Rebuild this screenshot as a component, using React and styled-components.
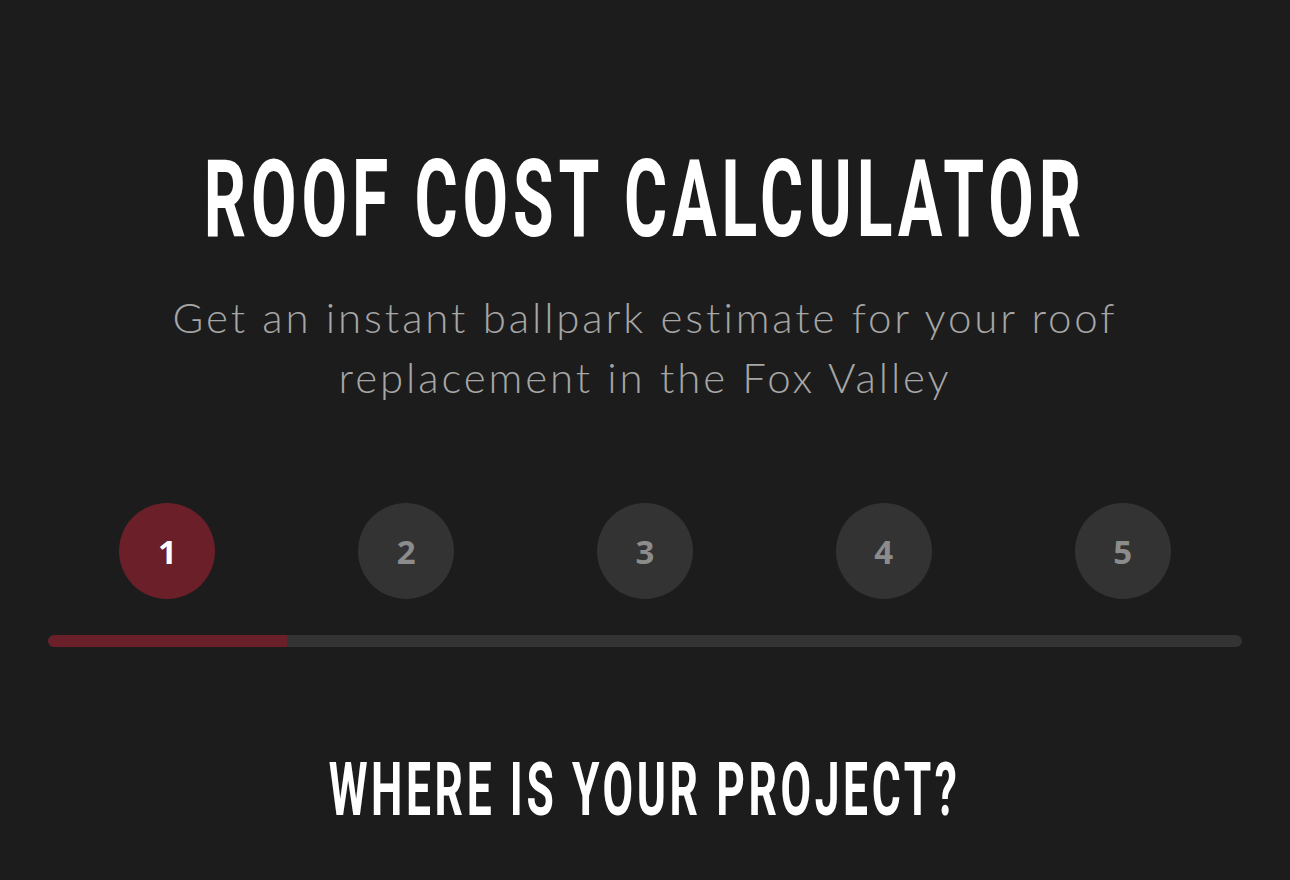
import React from 'react'
import styled, { createGlobalStyle } from 'styled-components'

const GlobalStyle = createGlobalStyle`
  html, body {
    margin: 0;
    padding: 0;
    background: #1c1c1c;
  }
  * { box-sizing: border-box; }
`

const steps = [1, 2, 3, 4, 5]
const currentStep = 1

const App = () => {
  return (
    <Page>
      <GlobalStyle />
      <Header>
        <Title><span>ROOF COST CALCULATOR</span></Title>
        <Subtitle>
          Get an instant ballpark estimate for your roof<br />
          replacement in the Fox Valley
        </Subtitle>
      </Header>

      <Progress>
        <Steps>
          {steps.map((n) => (
            <Step key={n}>
              <Dot active={n <= currentStep}>{n}</Dot>
            </Step>
          ))}
        </Steps>
        <Track>
          <Fill style={{ width: `${(currentStep / steps.length) * 100}%` }} />
        </Track>
      </Progress>

      <Question><span>WHERE IS YOUR PROJECT?</span></Question>
    </Page>
  )
}

const Page = styled.div`
  width: 1290px;
  min-height: 880px;
  padding: 140px 48px 0;
  background: #1c1c1c;
  color: #fff;
  overflow: hidden;
`

const Header = styled.div`
  display: flex;
  flex-direction: column;
  align-items: center;
`

// condensed display heading, squeezed horizontally
const Title = styled.h1`
  margin: 0;
  font-family: Roboto, "Liberation Sans", sans-serif;
  font-weight: 700;
  font-size: 107px;
  line-height: 120px;
  letter-spacing: 8px;
  white-space: nowrap;
  color: #fff;

  span {
    display: inline-block;
    transform: scaleX(0.617);
    transform-origin: center;
  }
`

const Subtitle = styled.p`
  margin: 27px 0 0;
  font-family: Lato, "Open Sans", sans-serif;
  font-weight: 300;
  font-size: 42px;
  line-height: 60px;
  letter-spacing: 2.9px;
  text-align: center;
  color: #a6a6a6;
`

const Progress = styled.div`
  margin-top: 96px;
`

const Steps = styled.div`
  display: grid;
  grid-template-columns: repeat(5, 1fr);
`

const Step = styled.div`
  display: flex;
  justify-content: center;
`

const Dot = styled.div`
  width: 96px;
  height: 96px;
  border-radius: 50%;
  display: flex;
  align-items: center;
  justify-content: center;
  background: ${(p) => (p.active ? '#6b1f29' : '#333333')};
  color: ${(p) => (p.active ? '#ffffff' : '#8c8c8c')};
  font-family: "Open Sans", Roboto, sans-serif;
  font-weight: 700;
  font-size: 33px;
`

const Track = styled.div`
  margin-top: 36px;
  height: 12px;
  border-radius: 6px;
  background: #333333;
  overflow: hidden;
`

const Fill = styled.div`
  height: 100%;
  background: #6b1f29;
  border-radius: 6px 0 0 6px;
`

const Question = styled.h2`
  margin: 103px 0 0;
  text-align: center;
  font-family: Roboto, "Liberation Sans", sans-serif;
  font-weight: 700;
  font-size: 74px;
  line-height: 80px;
  letter-spacing: 6px;
  white-space: nowrap;
  color: #fff;

  span {
    display: inline-block;
    transform: scaleX(0.6);
    transform-origin: center;
  }
`

export default App
